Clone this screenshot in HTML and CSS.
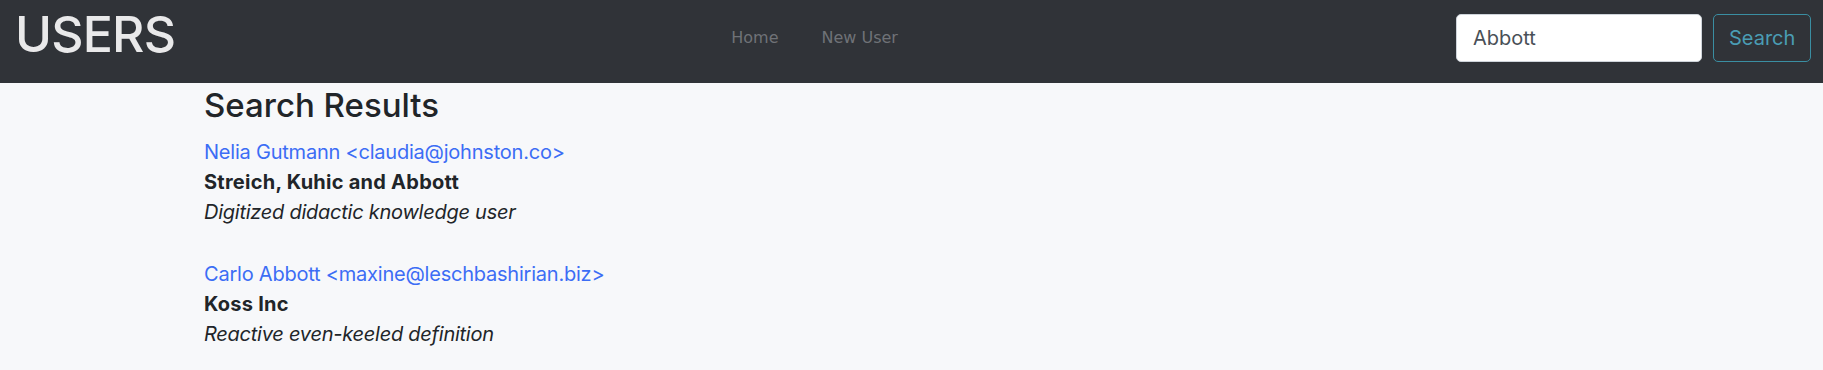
FILE: index.html
```html
<!DOCTYPE html>
<html lang="en">
<head>
<meta charset="utf-8">
<title>Users</title>
<link rel="stylesheet" href="styles.css">
</head>
<body>
<header class="navbar">
  <h1 class="brand">USERS</h1>
  <nav class="nav">
    <a class="nav-link" href="#">Home</a>
    <a class="nav-link" href="#">New User</a>
  </nav>
  <form class="search-form">
    <input class="search-input" type="text" value="Abbott">
    <button class="search-btn" type="button">Search</button>
  </form>
</header>
<main class="content">
  <h2 class="title">Search Results</h2>
  <div class="result">
    <a class="result-link" href="#">Nelia Gutmann &lt;claudia@johnston.co&gt;</a>
    <div class="result-company">Streich, Kuhic and Abbott</div>
    <div class="result-title">Digitized didactic knowledge user</div>
  </div>
  <div class="result">
    <a class="result-link" href="#">Carlo Abbott &lt;maxine@leschbashirian.biz&gt;</a>
    <div class="result-company">Koss Inc</div>
    <div class="result-title">Reactive even-keeled definition</div>
  </div>
</main>
</body>
</html>
```
FILE: styles.css
```css
html, body {
  margin: 0;
  padding: 0;
}
body {
  background: #f7f8fa;
  font-family: Inter, "Liberation Sans", sans-serif;
  color: #212529;
  font-size: 20px;
  line-height: 30px;
}
.navbar {
  box-sizing: border-box;
  height: 83px;
  background: #303338;
  display: flex;
  align-items: center;
  padding: 0 12px 8px 15px;
}
.brand {
  margin: 0 0 8px 0;
  font-size: 50px;
  line-height: 60px;
  font-weight: 500;
  letter-spacing: -0.8px;
  color: #e9e9ea;
}
.nav {
  margin: 0 auto;
  display: flex;
  gap: 43px;
  padding-top: 1px;
  padding-right: 2px;
}
.nav-link {
  font-family: "DejaVu Sans", sans-serif;
  font-size: 16px;
  line-height: 24px;
  color: #6f7277;
  text-decoration: none;
}
.search-form {
  display: flex;
  gap: 11px;
}
.search-input {
  box-sizing: border-box;
  width: 246px;
  height: 48px;
  margin: 0;
  padding: 0 16px;
  border: 1px solid #ced4da;
  border-radius: 5px;
  background: #fff;
  font-family: Inter, "Liberation Sans", sans-serif;
  font-size: 20px;
  color: #495057;
  outline: none;
}
.search-btn {
  box-sizing: border-box;
  width: 98px;
  height: 48px;
  margin: 0;
  padding: 0 15px;
  border: 1px solid #3a8ea2;
  border-radius: 5px;
  background: transparent;
  font-family: Inter, "Liberation Sans", sans-serif;
  font-size: 20px;
  color: #4a9db4;
}
.content {
  padding: 2px 0 0 204px;
}
.title {
  margin: 0 0 12px 0;
  font-size: 33px;
  line-height: 40px;
  font-weight: 500;
  color: #212529;
}
.result {
  margin-bottom: 32px;
}
.result-link {
  display: block;
  color: #3c6df5;
  text-decoration: none;
  letter-spacing: -0.22px;
}
.result-company {
  font-weight: 700;
  letter-spacing: 0.25px;
}
.result-title {
  font-style: italic;
  letter-spacing: -0.25px;
}
```
